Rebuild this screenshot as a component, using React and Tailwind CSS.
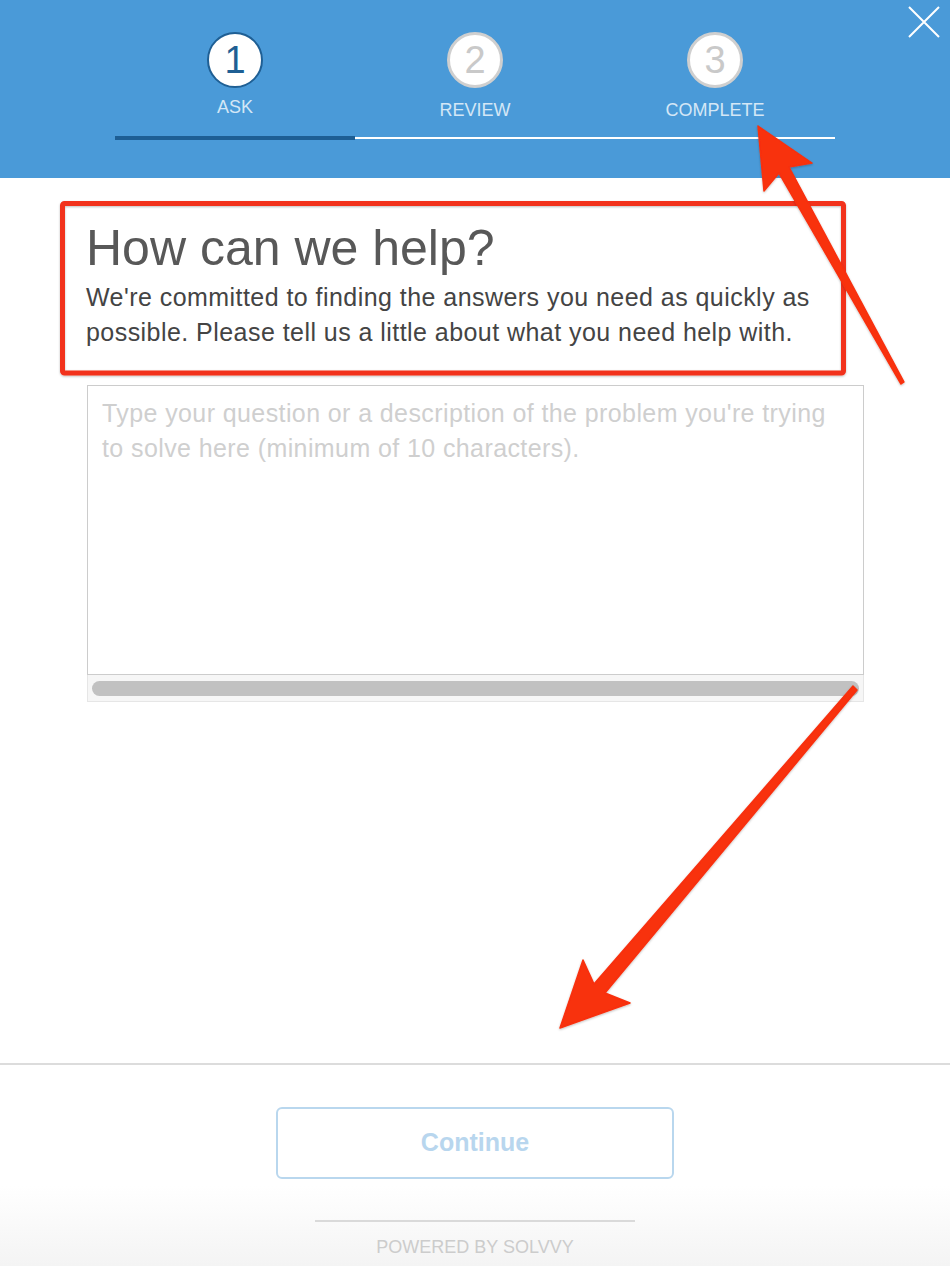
import React from 'react';

const steps = [
  { n: 1, label: 'ASK', active: true },
  { n: 2, label: 'REVIEW', active: false },
  { n: 3, label: 'COMPLETE', active: false },
];

const StepCircle = ({ step }) => (
  <div className="flex flex-col items-center">
    <div
      className={
        step.active
          ? 'flex h-[56px] w-[56px] items-center justify-center rounded-full border-2 border-[#1f5f94] bg-white text-[38px] leading-none text-[#1f5f94]'
          : 'flex h-[56px] w-[56px] items-center justify-center rounded-full border-[3px] border-[#cfcfcf] bg-white text-[38px] leading-none text-[#c9c9c9]'
      }
    >
      {step.n}
    </div>
    <span
      className={
        step.active
          ? 'mt-[9px] text-[18px] leading-[20px] text-[#d4e7f6]'
          : 'mt-[12px] text-[18px] leading-[20px] text-[#d4e7f6]'
      }
    >
      {step.label}
    </span>
  </div>
);

// annotation overlay: red box + two arrows
const Annotations = () => (
  <svg className="pointer-events-none absolute inset-0" width="950" height="1266" viewBox="0 0 950 1266">
    <defs>
      <filter id="sh" x="-10%" y="-10%" width="120%" height="120%">
        <feDropShadow dx="0" dy="1" stdDeviation="1.2" floodColor="#000" floodOpacity="0.25" />
      </filter>
    </defs>
    <rect x="62.5" y="203.5" width="781" height="169.5" rx="2" fill="none" stroke="#f2301b" strokeWidth="5" filter="url(#sh)" />
    <polygon
      points="758,126 812,163 789,167 904,382 901,384 779,173 764,191"
      fill="#f8300e"
      strokeLinejoin="round"
      stroke="#f8300e"
      strokeWidth="1.5"
      filter="url(#sh)"
    />
    <polygon
      points="560,1028 583,960 594,984 853,686 857,690 605,993 630,1003"
      fill="#f8300e"
      strokeLinejoin="round"
      stroke="#f8300e"
      strokeWidth="1.5"
      filter="url(#sh)"
    />
  </svg>
);

const App = () => {
  return (
    <div
      className="relative flex h-[1266px] w-[950px] flex-col overflow-hidden bg-white"
      style={{ fontFamily: '"Liberation Sans", Arial, sans-serif' }}
    >
      {/* Header / stepper */}
      <div className="relative h-[178px] shrink-0 bg-[#4a9ad8]">
        <button className="absolute right-[10px] top-[6px] h-[32px] w-[32px]">
          <svg viewBox="0 0 32 32" className="h-[32px] w-[32px]" stroke="#fff" strokeWidth="2" fill="none">
            <path d="M1 1L31 31M31 1L1 31" />
          </svg>
        </button>
        <div className="mx-auto w-[720px] pt-[32px]">
          <div className="grid grid-cols-3">
            {steps.map((s) => (
              <StepCircle key={s.n} step={s} />
            ))}
          </div>
          <div className="mt-[16px] flex items-center">
            <div className="h-[4px] w-[240px] bg-[#1d5e94]" />
            <div className="h-[2px] flex-1 bg-white" />
          </div>
        </div>
      </div>

      {/* Body */}
      <div className="flex-1 px-[86px]">
        <h1 className="mt-[40px] text-[50px] leading-[60px] text-[#585858]">How can we help?</h1>
        <p className="mt-[2px] text-[25px] leading-[35px] tracking-[0.45px] text-[#444444]">
          We're committed to finding the answers you need as quickly as possible. Please tell us a little about what you need help with.
        </p>
        <div className="mt-[35px] ml-px">
          <textarea
            readOnly
            className="block h-[290px] w-full resize-none border border-[#cccccc] bg-white px-[14px] pt-[10px] text-[25px] leading-[35px] tracking-[0.4px] text-[#333] outline-none placeholder:text-[#cfcfcf]"
            placeholder="Type your question or a description of the problem you're trying to solve here (minimum of 10 characters)."
          />
          <div className="flex h-[27px] items-center border-x border-b border-[#e6e6e6] bg-[#f6f6f6] px-[4px]">
            <div className="h-[15px] w-full rounded-full bg-[#c1c1c1]" />
          </div>
        </div>
      </div>

      {/* Footer */}
      <div className="flex h-[203px] shrink-0 flex-col items-center border-t-2 border-[#dcdcdc] bg-gradient-to-b from-white from-60% to-[#f4f4f4]">
        <button className="mt-[42px] flex h-[72px] w-[398px] items-center justify-center rounded-[6px] border-2 border-[#b9d7ee] bg-white text-[25px] font-bold text-[#b8d6ee]">
          Continue
        </button>
        <div className="mt-[41px] h-[2px] w-[320px] bg-[#dadada]" />
        <span className="mt-[15px] text-[18px] leading-[20px] text-[#cccccc]">POWERED BY SOLVVY</span>
      </div>

      <Annotations />
    </div>
  );
};

export default App;
